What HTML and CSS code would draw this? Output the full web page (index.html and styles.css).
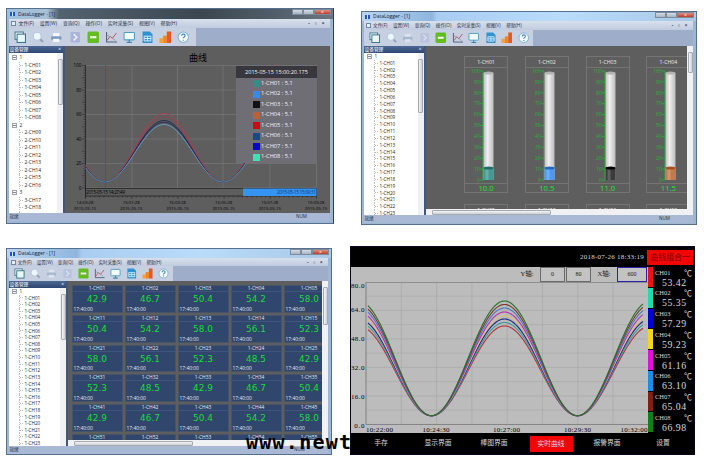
FILE: index.html
```html
<!DOCTYPE html>
<html lang="en">
<head>
    <meta charset="UTF-8">
    <meta name="viewport" content="width=device-width, initial-scale=1.0">
    <title>DataLogger</title>
    <link rel="stylesheet" href="styles.css">
</head>
<body>
    <!-- Toolbar icons -->
    <svg width="0" height="0" class="sprites">
        <symbol id="i-copy" viewBox="0 0 12 12"><rect x="1" y="1" width="8" height="7" fill="#fff" stroke="#447c94" /><rect x="3" y="3" width="8" height="8" fill="#e9f6f4" stroke="#337388" /></symbol>
        <symbol id="i-search" viewBox="0 0 12 12"><path d="M7.5 7.5l3 3" stroke="#8fa0b8" stroke-width="2" /><circle cx="5" cy="5" r="3.8" fill="#eef6fc" stroke="#b4c6dc" /></symbol>
        <symbol id="i-print" viewBox="0 0 12 12"><rect x="3" y="2" width="6" height="4" fill="#f5f9fd" /><rect x="1" y="5" width="10" height="3.5" rx="1" fill="#8199bd" /><rect x="3" y="7.5" width="6" height="3" fill="#f4f8fc" /></symbol>
        <symbol id="i-next" viewBox="0 0 12 12"><rect x="1.5" y="1" width="9" height="10" rx="1" fill="#a9b3dc" /><path d="M4.5 3l3 3-3 3" fill="none" stroke="#eef0fb" stroke-width="1.4" /></symbol>
        <symbol id="i-minus" viewBox="0 0 12 12"><rect x=".5" y=".5" width="11" height="11" rx="1.5" fill="#63bd1e" /><rect x="3" y="5" width="6" height="2" fill="#fff" /></symbol>
        <symbol id="i-curve" viewBox="0 0 12 12"><path d="M1.5 1v9.5h10" fill="none" stroke="#55607a" /><path d="M2 9l3-4 2 2 4-5" fill="none" stroke="#c04a58" stroke-width=".9" /><path d="M2 4l4 2 4 3" fill="none" stroke="#9a8f9c" stroke-width=".8" /></symbol>
        <symbol id="i-screen" viewBox="0 0 12 12"><rect x="1" y="1.5" width="10" height="7" rx=".6" fill="#f3fbff" stroke="#4f9fc4" /><path d="M6 8.500v2M3.500 11h5" stroke="#4a84a4" stroke-width="1.200" /></symbol>
        <symbol id="i-table" viewBox="0 0 12 12"><path d="M1.500 .5h7l2.500 2.500v8.500h-9.500z" fill="#2e93d0" /><path d="M3 5h6.500v4.500h-6.500zM3 7.200h6.500M6.200 5v4.500" fill="none" stroke="#d9f0ff" stroke-width=".9" /></symbol>
        <symbol id="i-bars" viewBox="0 0 12 12"><rect x=".5" y="7" width="3.500" height="4.500" fill="#f0a339" /><rect x="4" y="4.500" width="3.500" height="7" fill="#f28522" /><rect x="7.500" y=".5" width="4" height="11" fill="#e65a1c" /></symbol>
        <symbol id="i-help" viewBox="0 0 12 12"><circle cx="6" cy="6" r="5" fill="#f4fbff" stroke="#7fb2d4" /><path d="M4.400 4.600q0-1.600 1.700-1.600t1.600 1.500q0 .9-1.600 1.900v.6M6.100 8.300v1" fill="none" stroke="#3c86bb" stroke-width="1.100" /></symbol>
    </svg>

    <div class="board">
        <!-- Curve view -->
        <div class="win win-curve">
            <div class="titlebar"><span class="logo"></span>DataLogger - [1]<span class="caption-btns"><i></i><i></i><i class="close">×</i></span></div>
            <div class="menubar"></div>
            <div class="toolbar"></div>
            <div class="body">
                <div class="side">
                    <div class="side-head">设备管理<span>×</span></div>
                    <div class="side-body"><div class="tree" data-groups="1:1-8,2:9-16,3:17-19"></div><div class="vbar"><b></b></div></div>
                </div>
                <div class="main">
                    <svg class="trend" id="trend" viewBox="65 46 265 167"></svg>
                    <div class="legend">
                        <div class="legend-time">2015-05-15 15:00:20.175</div>
                        <ul id="legendList"></ul>
                    </div>
                </div>
            </div>
            <div class="status"><span>就绪</span><span>NUM</span></div>
        </div>

        <!-- Bar view -->
        <div class="win win-bar">
            <div class="titlebar"><span class="logo"></span>DataLogger - [1]<span class="caption-btns"><i></i><i></i><i class="close">×</i></span></div>
            <div class="menubar"></div>
            <div class="toolbar"></div>
            <div class="body">
                <div class="side">
                    <div class="side-head">设备管理<span>×</span></div>
                    <div class="side-body"><div class="tree" data-groups="1:1-23"></div><div class="vbar"><b></b></div></div>
                </div>
                <div class="main split">
                    <div class="pane">
                        <div class="gauges" id="gauges"></div>
                        <div class="vbar"><b></b></div>
                    </div>
                    <div class="hbar"><b></b></div>
                </div>
            </div>
            <div class="status"><span>就绪</span><span>NUM</span></div>
        </div>

        <!-- Digital view -->
        <div class="win win-digit">
            <div class="titlebar"><span class="logo"></span>DataLogger - [1]<span class="caption-btns"><i></i><i></i><i class="close">×</i></span></div>
            <div class="menubar"></div>
            <div class="toolbar"></div>
            <div class="body">
                <div class="side">
                    <div class="side-head">设备管理<span>×</span></div>
                    <div class="side-body"><div class="tree" data-groups="1:1-23"></div><div class="vbar"><b></b></div></div>
                </div>
                <div class="main split">
                    <div class="pane">
                        <div class="tiles" id="tiles"></div>
                        <div class="vbar"><b></b></div>
                    </div>
                    <div class="hbar"><b></b></div>
                </div>
            </div>
            <div class="status"><span>就绪</span><span>NUM</span></div>
        </div>

        <!-- Recorder panel -->
        <div class="recorder">
            <div class="rec-head"><span class="rec-date">2018-07-26 18:33:19</span><span class="rec-group">曲线组合一</span></div>
            <div class="rec-body">
                <div class="rec-plot">
                    <div class="rec-axes">
                        <span class="lbl">Y轴:</span><span class="box">0</span><span class="box">80</span>
                        <span class="lbl">X轴:</span><span class="box active">600</span>
                    </div>
                    <svg id="recPlot" viewBox="351 282 297 151"></svg>
                </div>
                <div class="rec-channels" id="recChannels"></div>
            </div>
            <div class="rec-foot">
                <span>手存</span><span>显示界面</span><span>棒图界面</span><span class="on">实时曲线</span><span>报警界面</span><span>设置</span>
            </div>
        </div>
        <div class="watermark">www.newtc</div>
    </div>

    <script src="app.js"></script>
</body>
</html>
```
FILE: styles.css
```css
* {
    box-sizing: border-box;
}

body {
    margin: 0;
    background: #fff;
    font-family: "Open Sans", "Noto Sans CJK SC", sans-serif;
    font-size: 5px;
    color: #222;
}

.sprites {
    display: block;
}

.board {
    position: relative;
    width: 704px;
    height: 461px;
    overflow: hidden;
    display: grid;
    grid-template-columns: 350px 354px;
    grid-template-rows: 246px 215px;
}

/* Window frame */
.win {
    display: flex;
    flex-direction: column;
    border: 1px solid #55718f;
    padding: 0 3px 0 1.5px;
    background: #9db7d3;
    overflow: hidden;
    white-space: nowrap;
    line-height: 1;
}

.win-curve {
    width: 328px;
    height: 216px;
    margin: 8px 0 0 6px;
    --title: 10px;
    --menu: 9px;
    --tools: 18px;
    --body: 167px;
    --pitch: 18.1px;
    --icon: 12.5px;
    --tools-w: 187px;
    --side: 56.5px;
    --side-head: 7px;
    --row: 7.5px;
    --menu-gap: 6px;
    --menu-font: 4.9px;
    border-right-color: #333d49;
}

.win-bar {
    width: 336px;
    height: 214px;
    margin: 11px 0 0 11px;
    --title: 9px;
    --menu: 9px;
    --tools: 16px;
    --body: 169px;
    --pitch: 16.5px;
    --icon: 11.5px;
    --tools-w: 169px;
    --side: 62px;
    --side-head: 7px;
    --row: 6.83px;
    --menu-gap: 5.6px;
    --menu-font: 4.6px;
}

.win-digit {
    width: 326px;
    height: 207px;
    margin: 2px 0 0 6px;
    --title: 9px;
    --menu: 8px;
    --tools: 15px;
    --body: 165px;
    --pitch: 16px;
    --icon: 11px;
    --tools-w: 164px;
    --side: 59.5px;
    --side-head: 7px;
    --row: 6.62px;
    --menu-gap: 5.2px;
    --menu-font: 4.5px;
}

.titlebar {
    height: var(--title);
    flex: none;
    display: flex;
    align-items: center;
    margin: 0 -3px 0 -1.5px;
    padding-left: 3px;
    font-size: 5px;
    color: #10243c;
    background: linear-gradient(90deg, #b9d4ee, #8fb6df 70px, #a9cdf1 75px, #b9dcfb 60%, #a8c8e6);
}

.win-curve .titlebar {
    background: linear-gradient(90deg, #9cc0de, #a9c0d3 40px, #53626f 52px, #3b4650 60%, #53606b 84%, #6b7681);
}

.logo {
    width: 5px;
    height: 4px;
    margin-right: 3px;
    background: linear-gradient(90deg, #2255b8 40%, #d8e8ff 40% 60%, #2255b8 60%);
}

.caption-btns {
    margin-left: auto;
    align-self: flex-start;
    display: flex;
    padding-right: 2px;
}

.caption-btns i {
    width: 11px;
    height: 6px;
    border: .5px solid #7d8b9b;
    background: linear-gradient(#d5dde6, #a6b3c1);
    font-style: normal;
}

.caption-btns .close {
    width: 17px;
    background: linear-gradient(#dc9184, #c03a27);
    color: #fff;
    line-height: 5px;
    text-align: center;
}

.menubar {
    height: var(--menu);
    flex: none;
    display: flex;
    align-items: center;
    gap: var(--menu-gap);
    padding: 0 2px;
    background: linear-gradient(#d8e0ec, #c0cbdf);
    font-size: var(--menu-font);
    color: #26303f;
}

.menubar .doc {
    width: 5px;
    height: 5px;
    margin-right: -3px;
    border: 1px solid #6e88a8;
    background: #e6eef6;
}

.menubar .mdi {
    margin-left: auto;
    letter-spacing: 3.5px;
    font-weight: bold;
}

.toolbar {
    height: var(--tools);
    flex: none;
    display: flex;
    align-items: center;
    padding-left: 3px;
    background: linear-gradient(90deg, #c7d0e1 var(--tools-w), #9dadca var(--tools-w));
}

.toolbar span {
    width: var(--pitch);
    display: flex;
    justify-content: center;
}

.toolbar svg {
    width: var(--icon);
    height: var(--icon);
}

.toolbar .off {
    opacity: .45;
}

.body {
    height: var(--body);
    flex: none;
    display: flex;
}

.status {
    height: 7.5px;
    flex: none;
    display: flex;
    justify-content: space-between;
    align-items: center;
    padding: 0 23px 0 1px;
    background: #a9b9d5;
    color: #1f2b3c;
    font-size: 4.6px;
}

/* Device tree */
.side {
    width: var(--side);
    flex: none;
    display: flex;
    flex-direction: column;
    border-right: 2px solid #435878;
    background: #fff;
}

.side-head {
    height: var(--side-head);
    flex: none;
    display: flex;
    align-items: center;
    justify-content: space-between;
    padding: 0 2px 0 1px;
    background: linear-gradient(#4d6894, #2d4672);
    color: #fff;
    font-size: 4.7px;
}

.side-body {
    flex: 1;
    min-height: 0;
    display: flex;
}

.tree {
    flex: 1;
    overflow: hidden;
    padding-left: 1px;
    font-size: 4.9px;
}

.win-bar .tree,
.win-digit .tree {
    font-size: 4.6px;
}

.tree div {
    height: var(--row);
    line-height: var(--row);
    display: flex;
    align-items: center;
}

.tree .group::before {
    content: "";
    width: 3px;
    height: 3px;
    margin: 0 3px 0 2px;
    border: .5px solid #9aa5b2;
    background: linear-gradient(#fff 40%, #889 40% 60%, #fff 60%);
}

.tree .leaf {
    margin-left: 9.5px;
    border-left: 1px dotted #bbb;
}

.tree .leaf::before {
    content: "";
    width: 3px;
    margin-right: 1.5px;
    border-top: 1px dotted #bbb;
}

.win-curve .tree {
    padding-top: 1.2px;
}

.vbar {
    width: 6px;
    flex: none;
    padding: 6px .5px;
    background: #f1f1f3;
}

.vbar b {
    display: block;
    height: 46px;
    border: .5px solid #a6abb2;
    border-radius: 1px;
    background: linear-gradient(90deg, #f4f4f5, #cdd0d4);
}

.win-bar .side .vbar b {
    height: 54px;
}

.main {
    flex: 1;
    min-width: 0;
    position: relative;
    background: #5e5e5e;
}

.split {
    display: flex;
    flex-direction: column;
}

.pane {
    flex: 1;
    min-height: 0;
    display: flex;
}

.pane .vbar b {
    height: 21px;
}

.win-digit .pane .vbar b {
    height: 38px;
}

.hbar {
    height: 6px;
    flex: none;
    padding: .5px 6px;
    background: #f1f1f3;
}

.hbar b {
    display: block;
    width: 119px;
    height: 5px;
    border: .5px solid #a6abb2;
    border-radius: 1px;
    background: linear-gradient(#f4f4f5, #cdd0d4);
}

/* Trend chart */
.trend {
    display: block;
    width: 265px;
    height: 167px;
}

.legend {
    position: absolute;
    left: 171px;
    top: 20px;
    width: 81px;
    height: 97px;
    background: #6f6e74;
    color: #f3f3f3;
}

.legend-time {
    height: 12px;
    line-height: 12px;
    background: #38373d;
    text-align: center;
    font-size: 5.5px;
}

.legend ul {
    list-style: none;
    margin: 0;
    padding: .5px 0 0 17px;
}

.legend li {
    height: 10.5px;
    display: flex;
    align-items: center;
    gap: 1px;
    font-size: 5.7px;
}

.legend li i {
    width: 7px;
    height: 7px;
}

/* Cylinder gauges */
.gauges {
    flex: 1;
    overflow: hidden;
    display: grid;
    grid-template-columns: repeat(4, 44px);
    grid-template-rows: 136.5px 136px;
    gap: 11px 16.8px;
    padding: 10px 0 0 38.5px;
}

.gauge {
    border: 1px solid #737573;
    display: flex;
    flex-direction: column;
    text-align: center;
}

.gauge-name {
    height: 10.5px;
    line-height: 11px;
    border-bottom: 1px solid #737573;
    color: #ececec;
    font-size: 5.2px;
}

.gauge svg {
    width: 42px;
    height: 115px;
    flex: none;
}

.gauge-value {
    flex: 1;
    border-top: 1px solid #737573;
    color: #24e03a;
    font-size: 7.7px;
    line-height: 9px;
}

/* Digital tiles */
.tiles {
    flex: 1;
    overflow: hidden;
    display: grid;
    grid-template-columns: repeat(5, 49px);
    grid-auto-rows: 25.8px;
    gap: 4px;
    padding: 5px 0 0 4.5px;
}

.tile {
    display: flex;
    flex-direction: column;
    background: #31466c;
    outline: 1px solid #46546a;
    color: #e3e8ef;
    text-align: center;
    font-size: 4.9px;
}

.tile-name {
    height: 6px;
    line-height: 5.5px;
    border-bottom: .5px solid #3f557c;
}

.tile-value {
    height: 13.8px;
    line-height: 14.5px;
    color: #11df34;
    font-family: "DejaVu Sans", sans-serif;
    font-size: 8.9px;
}

.tile-time {
    text-align: left;
    padding-left: 1px;
    line-height: 6px;
}

/* Recorder */
.recorder {
    position: relative;
    z-index: 2;
    width: 345px;
    height: 209px;
    display: flex;
    flex-direction: column;
    border: 1px solid #05051f;
    background: #000;
    color: #d8d8d8;
    font-family: "Liberation Serif", "Noto Sans CJK SC", serif;
    line-height: 1;
}

.rec-head {
    height: 20px;
    flex: none;
    display: flex;
    justify-content: flex-end;
    align-items: center;
}

.rec-date {
    font-size: 7px;
    letter-spacing: .25px;
    margin-right: 3px;
}

.rec-group {
    width: 46px;
    height: 15px;
    margin-right: 1px;
    background: #f20505;
    color: #790000;
    font-size: 8px;
    line-height: 15px;
    text-align: center;
    white-space: nowrap;
}

.rec-body {
    height: 166px;
    display: flex;
}

.rec-plot {
    width: 297px;
    background: #bcbcbc;
}

.rec-plot svg {
    display: block;
    width: 297px;
    height: 151px;
}

.rec-axes {
    height: 15px;
    display: flex;
    justify-content: flex-end;
    align-items: center;
    gap: 1px;
    padding-right: 1px;
    color: #222;
    font-size: 6.5px;
}

.rec-axes .lbl {
    width: 24px;
    text-align: center;
}

.rec-axes .box {
    width: 25px;
    height: 15px;
    border: 1px solid #6b6b6b;
    background: #c3c3c3;
    font-size: 6px;
    line-height: 13px;
    text-align: center;
}

.rec-axes .active {
    width: 30px;
    border-color: #2a25a8;
}

.rec-channels {
    width: 46px;
    display: grid;
    grid-template-rows: repeat(8, 1fr);
}

.rec-ch {
    display: flex;
    min-height: 0;
    border-bottom: 1px solid #000;
}

.rec-ch i {
    width: 5px;
}

.rec-ch p {
    flex: 1;
    margin: 0;
    padding: 2.5px 2px 0 2px;
    display: flex;
    flex-wrap: wrap;
    align-content: flex-start;
    justify-content: space-between;
    font-size: 6.5px;
}

.rec-ch em {
    font-style: normal;
    font-size: 8px;
}

.rec-ch b {
    width: 100%;
    padding-left: 7px;
    font-size: 9.8px;
    font-weight: normal;
    letter-spacing: .5px;
}

.rec-foot {
    flex: 1;
    display: grid;
    grid-template-columns: 60px 54px 58px 56px 56px 56px;
    align-items: center;
    justify-items: center;
    font-size: 6.8px;
}

.rec-foot .on {
    width: 43px;
    height: 16px;
    background: #f20505;
    line-height: 15px;
    text-align: center;
}

.watermark {
    position: absolute;
    left: 246px;
    top: 430px;
    color: #000;
    font: bold 20px/24px "DejaVu Sans Mono", monospace;
    letter-spacing: 1.25px;
}
```
FILE: app.js
```javascript
const pad = n => String(n).padStart(2, '0');
const all = s => document.querySelectorAll(s);
const get = id => document.getElementById(id);

// menus and toolbars are the same in every window
const menus = ['文件(F)', '设置(W)', '查询(Q)', '操作(O)', '实时采集(S)', '视图(V)', '帮助(H)'];
const icons = ['copy', 'search', 'print', 'next', 'minus', 'curve', 'screen', 'table', 'bars', 'help'];

all('.menubar').forEach(bar => {
    bar.innerHTML = '<span class="doc"></span>' + menus.map(m => `<span>${m}</span>`).join('') + '<span class="mdi">-▫×</span>';
});

all('.toolbar').forEach((bar, n) => {
    bar.innerHTML = icons.map((name, i) => {
        const off = n > 0 && (i === 2 || i === 3) ? 'off' : '';
        return `<span class="${off}"><svg><use href="#i-${name}"/></svg></span>`;
    }).join('');
});

all('.tree').forEach(tree => {
    let html = '';
    tree.dataset.groups.split(',').forEach(g => {
        const [dev, range] = g.split(':');
        const [from, to] = range.split('-').map(Number);
        html += `<div class="group">${dev}</div>`;
        for (let c = from; c <= to; c++) html += `<div class="leaf">${dev}-CH${pad(c)}</div>`;
    });
    tree.innerHTML = html;
});

// cosine wave between low and peak
function wave(x0, x1, center, half, low, peak) {
    let d = '';
    for (let x = x0; x <= x1; x += 1) {
        const y = low - (low - peak) * (1 + Math.cos((x - center) / half * Math.PI)) / 2;
        d += (d ? 'L' : 'M') + x + ' ' + y.toFixed(2);
    }
    return d;
}

function line(x1, y1, x2, y2, color, w = 1) {
    return `<path d="M${x1} ${y1}L${x2} ${y2}" stroke="${color}" stroke-width="${w}"/>`;
}

// Trend chart
const trendColors = ['#2f8f87', '#3888f4', '#111111', '#c06030', '#cc0a10', '#174a86', '#0808c4', '#48dcb4'];
let t = '';
[132, 177.5, 223, 270, 316.5].forEach(x => t += line(x, 65, x, 188, '#757575', .8));
for (let i = 0; i <= 5; i++) {
    const y = 65.5 + i * 24.5;
    t += line(85.5, y, 316.5, y, '#757575', .8);
    t += `<text x="81.500" y="${y + 1.8}" font-size="4.600" text-anchor="end">${100 - i * 20}</text>`;
}
for (let i = 0; i <= 50; i++) {
    t += line(i % 5 ? 83.5 : 82, 65.5 + i * 2.45, 85.5, 65.5 + i * 2.45, '#222', .5);
}
t += line(85.5, 65, 85.5, 198, '#222', .8);
t += line(105.5, 65, 105.5, 188, '#a83036', 1);
[['#b83a4c', 113.5], ['#8d4655', 117], ['#1f264e', 120.5], ['#24245e', 122.3], ['#62a5c6', 124.5]].forEach(c => {
    t += `<path d="${wave(85.5, 250, 164, 59, 182, c[1])}" fill="none" stroke="${c[0]}" stroke-width="1"/>`;
});
t += '<rect x="85.500" y="188.500" width="231" height="7.500" fill="none" stroke="#222" stroke-width=".8"/>';
t += '<rect x="243" y="188.500" width="73.500" height="7.500" fill="#3593f2"/>';
t += '<text x="86" y="194" font-size="4.800" textLength="39">2015-05-15 14:27:49</text>';
t += '<text x="277" y="194" font-size="4.800" textLength="39" fill="#143c77">2015-05-15 15:09:31</text>';
for (let i = 0; i <= 50; i++) {
    t += line(85.5 + i * 4.62, 196, 85.5 + i * 4.62, i % 10 ? 197.5 : 199, '#222', .5);
}
['14:59:28', '15:01:28', '15:03:28', '15:05:28', '15:07:28', '15:09:28'].forEach((s, i) => {
    const x = 85 + i * 46.2;
    t += `<text x="${x}" y="204" font-size="4.300" text-anchor="middle">${s}</text>`;
    t += `<text x="${x}" y="209.500" font-size="4.300" text-anchor="middle">2015-05-15</text>`;
});
t += '<text x="198" y="61" font-size="9" text-anchor="middle">曲线</text>';
get('trend').innerHTML = t;

get('legendList').innerHTML = trendColors.map((c, i) =>
    `<li><i style="background: ${c}"></i>1-CH${pad(i + 1)} : 5.1</li>`).join('');

// Gauges
function gauge(name, value, color, dark) {
    let s = '';
    for (let i = 0; i <= 10; i++) {
        const y = 3 + i * 10.9;
        s += `<text x="14.800" y="${y + 1.7}" font-size="5" text-anchor="end" fill="#22b832">${100 - i * 10}</text>`;
        s += line(15, y, 18, y, '#22b832', .8);
    }
    s += line(17.8, 3, 17.8, 112, '#22b832', .6);
    s += '<path d="M18.500 5V112h10V5z" fill="url(#tube)"/><ellipse cx="23.500" cy="5" rx="5" ry="1.600" fill="#b4b4b4"/>';
    s += `<path d="M18.500 100V112h10V100z" fill="${color}"/><path d="M20.500 100V112h3V100z" fill="#fff" opacity=".2"/>`;
    s += `<ellipse cx="23.500" cy="100" rx="5" ry="1.500" fill="${dark}"/>`;
    return `<div class="gauge"><div class="gauge-name">${name}</div><svg viewBox="0 0 42 115">
        <linearGradient id="tube"><stop offset="0" stop-color="#bdbdbd"/><stop offset=".4" stop-color="#efefef"/><stop offset="1" stop-color="#bcbcbc"/></linearGradient>
        ${s}</svg><div class="gauge-value">${value}</div></div>`;
}

get('gauges').innerHTML = [
    ['1-CH01', '10.0', '#439a92', '#236e68'],
    ['1-CH02', '10.5', '#4c98f2', '#2468c0'],
    ['1-CH03', '11.0', '#3b3b3b', '#000000'],
    ['1-CH04', '11.5', '#c27a4c', '#a9501f'],
    ['1-CH09', '14.0', '#439a92', '#236e68'],
    ['1-CH10', '14.5', '#4c98f2', '#2468c0'],
    ['1-CH11', '15.0', '#3b3b3b', '#000000'],
    ['1-CH12', '15.5', '#c27a4c', '#a9501f']
].map(g => gauge(...g)).join('');

// Tiles
const readings = [
    ['42.9', '46.7', '50.4', '54.2', '58.0'],
    ['50.4', '54.2', '58.0', '56.1', '52.3'],
    ['58.0', '56.1', '52.3', '48.5', '42.9'],
    ['52.3', '48.5', '42.9', '46.7', '50.4'],
    ['42.9', '46.7', '50.4', '54.2', '58.0'],
    ['50.4', '54.2', '58.0', '56.1', '52.3']
];
get('tiles').innerHTML = readings.map((row, r) => row.map((v, c) =>
    `<div class="tile"><div class="tile-name">1-CH${pad(r * 10 + c + 1)}</div>
    <div class="tile-value">${v}</div><div class="tile-time">17:40:00</div></div>`).join('')).join('');

// Recorder
const channels = [
    ['53.42', '#f01018', 326, '#b8323c'],
    ['55.35', '#22dcae', 322.5, '#3a9c9c'],
    ['57.29', '#0202d4', 319, '#1c2a86'],
    ['59.23', '#f0d820', 315.5, '#dcc07a'],
    ['61.16', '#de12de', 312, '#b832b4'],
    ['63.10', '#1a8ee6', 308, '#4a78c4'],
    ['65.04', '#802012', 304.5, '#7a3a30'],
    ['66.98', '#10801c', 301, '#28702c']
];
let p = '';
for (let i = 0; i <= 10; i++) p += line(366, 281.9 + i * 14.25, 647, 281.9 + i * 14.25, '#a9a9a9', .7);
for (let i = 0; i <= 8; i++) p += line(366 + i * 35.3, 282, 366 + i * 35.3, 424.5, '#a9a9a9', .7);
p += '<path d="M366 282.300H647.500M366 282V424.500H648" fill="none" stroke="#858585"/>';
['80.0', '64.0', '48.0', '32.0', '16.0', '0.0'].forEach((s, i) => {
    const y = [287.5, 312, 341, 369.7, 398.5, 427.5][i];
    const w = s.length * 3.4;
    p += `<text x="${364.5 - w}" y="${y}" font-size="7" textLength="${w}">${s}</text>`;
});
[['10:22:00', 366], ['10:24:30', 422.5], ['10:27:00', 493], ['10:29:30', 564], ['10:32:00', 620.5]].forEach(l => {
    p += `<text x="${l[1]}" y="431.500" font-size="7" textLength="27">${l[0]}</text>`;
});
channels.forEach(c => {
    p += `<path d="${wave(368, 643, 504.5, 73, 415.7, c[2])}" fill="none" stroke="${c[3]}" stroke-width="1.100"/>`;
});
get('recPlot').innerHTML = p;

get('recChannels').innerHTML = channels.map((c, i) =>
    `<div class="rec-ch"><i style="background: ${c[1]}"></i><p>CH${pad(i + 1)}<em>℃</em><b>${c[0]}</b></p></div>`).join('');
```
